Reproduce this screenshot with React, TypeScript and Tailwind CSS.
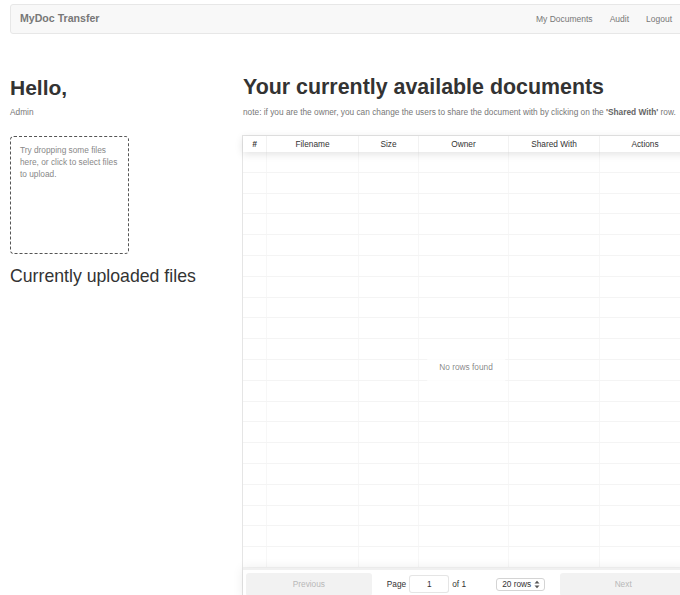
import React from "react";

const columns = [
  { label: "#", w: "w-[24px]" },
  { label: "Filename", w: "w-[92px]" },
  { label: "Size", w: "w-[60px]" },
  { label: "Owner", w: "w-[90px]" },
  { label: "Shared With", w: "w-[91px]" },
  { label: "Actions", w: "w-[90px]" },
];

const rows = Array.from({ length: 20 }, (_, i) => i);

function UpDown() {
  return (
    <svg width="6" height="9" viewBox="0 0 6 9" className="shrink-0">
      <path d="M0.5 3.5 L3 0.8 L5.5 3.5 Z" fill="#555" />
      <path d="M0.5 5.5 L3 8.2 L5.5 5.5 Z" fill="#555" />
    </svg>
  );
}

function DocumentsTable() {
  return (
    <div className="relative w-[448px] border border-black/10 bg-white flex flex-col">
      {/* header */}
      <div className="flex h-[16px] shadow-[0_2px_8px_0_rgba(0,0,0,0.12)] relative z-10 bg-white">
        {columns.map((c, i) => (
          <div
            key={c.label}
            className={`${c.w} shrink-0 flex items-center justify-center text-[8.3px] text-[#333] ${
              i < columns.length - 1 ? "border-r border-black/5" : ""
            } ${i === 0 ? "italic font-bold text-[7px]" : ""}`}
          >
            {c.label}
          </div>
        ))}
      </div>
      {/* body */}
      <div className="flex flex-col">
        {rows.map((r) => (
          <div key={r} className="flex h-[20.8px] border-b border-black/[0.045]">
            {columns.map((c, i) => (
              <div
                key={c.label}
                className={`${c.w} shrink-0 ${
                  i < columns.length - 1 ? "border-r border-black/[0.03]" : ""
                }`}
              />
            ))}
          </div>
        ))}
      </div>
      {/* pagination */}
      <div className="flex h-[31px] p-[3px] border-t-2 border-black/[0.06] shadow-[0_0_12px_0_rgba(0,0,0,0.08)] text-[8.3px]">
        <div className="flex-1 flex">
          <div className="w-full rounded-[3px] bg-[#f2f2f2] text-[#b8b8b8] flex items-center justify-center">
            Previous
          </div>
        </div>
        <div className="flex-[1.5] flex items-center justify-around text-[#333]">
          <div className="flex items-center">
            <span>Page</span>
            <div className="ml-[3px] w-[40px] h-[18px] border border-black/10 rounded-[3px] bg-white flex items-center justify-center">
              1
            </div>
            <span className="ml-[3px]">of 1</span>
          </div>
          <div className="w-[49px] h-[13px] border border-[#d4d4d4] rounded-[3px] bg-white flex items-center justify-between pl-[5px] pr-[4px]">
            <span>20 rows</span>
            <UpDown />
          </div>
        </div>
        <div className="flex-1 flex">
          <div className="w-full rounded-[3px] bg-[#f2f2f2] text-[#b8b8b8] flex items-center justify-center">
            Next
          </div>
        </div>
      </div>
      {/* empty state */}
      <div className="absolute left-1/2 top-1/2 -translate-x-1/2 -translate-y-1/2 z-20 bg-white/80 px-[12px] py-[12px] text-[8.3px] text-black/50 whitespace-nowrap">
        No rows found
      </div>
    </div>
  );
}

export default function App() {
  return (
    <div className="w-[680px] h-[595px] overflow-hidden bg-white text-[#333] font-['Liberation_Sans',Arial,sans-serif]">
      <div className="pt-[4px] pl-[10px]">
        <nav className="w-[678px] h-[30px] border border-[#e7e7e7] rounded-[3px] bg-[#f8f8f8] flex items-center">
          <span className="pl-[9px] text-[10.6px] font-bold text-[#777]">MyDoc Transfer</span>
          <div className="ml-auto flex items-center gap-[17px] pr-[15px] text-[8.5px] text-[#777]">
            <span>My Documents</span>
            <span>Audit</span>
            <span>Logout</span>
          </div>
        </nav>
      </div>

      <div className="flex pl-[10px] pt-[42px]">
        <div className="w-[232px] shrink-0 flex flex-col">
          <h1 className="text-[21px] leading-[23px] font-bold text-[#333]">Hello,</h1>
          <p className="mt-[7px] text-[8.3px] leading-[12px] text-[#777]">Admin</p>
          <div className="mt-[18px] w-[119px] h-[118px] border border-dashed border-[#555] rounded-[4px] pl-[9px] pr-[6px] pt-[8px] text-[8.3px] leading-[11.8px] text-[#888]">
            Try dropping some files
            <br />
            here, or click to select files
            <br />
            to upload.
          </div>
          <h2 className="mt-[12px] text-[17.7px] leading-[20px] text-[#333]">Currently uploaded files</h2>
        </div>

        <div className="w-[448px] shrink-0 flex flex-col">
          <h1 className="pl-[1px] text-[21.4px] leading-[23px] font-bold text-[#333] whitespace-nowrap">
            Your currently available documents
          </h1>
          <p className="mt-[7px] pl-[1px] text-[8.3px] leading-[12px] text-[#777] whitespace-nowrap">
            note: if you are the owner, you can change the users to share the document with by clicking on the{" "}
            <b className="text-[#666]">'Shared With'</b> row.
          </p>
          <div className="mt-[17px]">
            <DocumentsTable />
          </div>
        </div>
      </div>
    </div>
  );
}
